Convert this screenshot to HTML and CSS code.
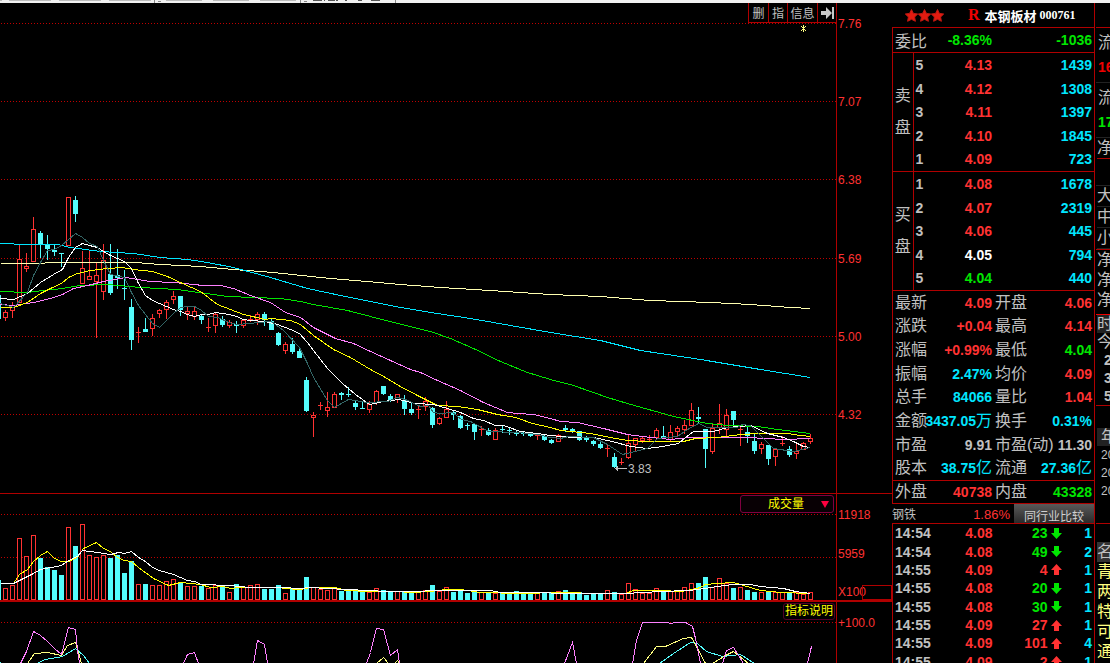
FILE: index.html
```html
<!DOCTYPE html>
<html lang="zh-CN">
<head>
<meta charset="utf-8">
<title>本钢板材 000761</title>
<link rel="stylesheet" href="styles.css">
</head>
<body>
<div class="app">
  <header class="strip">
    <svg width="420" height="3" shape-rendering="crispEdges" aria-hidden="true">
      <path d="M0 0h2M9 0h42M59 0h42M109 0h42M166 0h36M213 0h36M260 0h36" stroke="#bbb" stroke-width="2"/>
      <path d="M154.500 0v3M158 1.500h3M300.500 0v3M304 1.500h3M395.500 0v3" stroke="#888"/>
      <path d="M313 .5h9M324 .5h1M328 .5h7M336 .5h2M345 .5h2M358 .5h4M371 .5h9" stroke="#555"/>
    </svg>
  </header>
  <main class="main">
    <section class="charts">
      <div class="pane pane-price">
        <svg class="plot" id="price" viewBox="0 3 836 490" preserveAspectRatio="none"></svg>
        <div class="axis axis-price"><span>7.76</span><span>7.07</span><span>6.38</span><span>5.69</span><span>5.00</span><span>4.32</span></div>
        <div class="toolbar">
          <button type="button">删</button><button type="button">指</button><button type="button" class="wide">信息</button><button type="button" aria-label="隐藏面板"><svg width="13" height="12" viewBox="0 0 13 12"><path d="M0 4h5V0l6 6-6 6V8H0zM11 0h2v12h-2z" fill="#c8c8c8"/></svg></button>
        </div>
      </div>
      <div class="pane pane-volume">
        <svg class="plot" id="volume" viewBox="0 494 836 106" preserveAspectRatio="none"></svg>
        <div class="axis axis-volume"><span>11918</span><span>5959</span><span class="unit">X100<i></i></span></div>
        <div class="picker">
          <select aria-label="指标"><option>成交量</option></select>
          <svg width="8" height="7" aria-hidden="true"><path d="M0 0h8L4 7z" fill="#ff0040"/></svg>
        </div>
      </div>
      <div class="pane pane-indicator">
        <svg class="plot" id="indicator" viewBox="0 602 836 61" preserveAspectRatio="none"></svg>
        <div class="axis axis-indicator"><span>+100.0</span></div>
        <button type="button" class="explain">指标说明</button>
      </div>
    </section>

    <section class="quote">
      <h1 class="title">
        <svg class="stars" width="40" height="13" viewBox="0 0 40 13" aria-hidden="true"><g fill="#e31b10" stroke="#c01a12" stroke-width="1"><path id="star" d="M6.500.5l1.900 3.900 4.300.6-3.100 3 .8 4.300-3.900-2-3.900 2 .8-4.300L.3 5l4.300-.6z"/><use href="#star" x="13"/><use href="#star" x="26"/></g></svg>
        <span class="margin">R</span><span class="name">本钢板材</span><span class="code">000761</span>
      </h1>
      <div class="panel">
        <div class="ratio"><span class="label">委比</span><b class="green">-8.36%</b><b class="green end">-1036</b></div>
        <table class="book">
          <tr><th rowspan="5">卖<br>盘</th><td>5</td><td class="red">4.13</td><td>1439</td></tr>
          <tr><td>4</td><td class="red">4.12</td><td>1308</td></tr>
          <tr><td>3</td><td class="red">4.11</td><td>1397</td></tr>
          <tr><td>2</td><td class="red">4.10</td><td>1845</td></tr>
          <tr><td>1</td><td class="red">4.09</td><td>723</td></tr>
        </table>
        <table class="book">
          <tr><th rowspan="5">买<br>盘</th><td>1</td><td class="red">4.08</td><td>1678</td></tr>
          <tr><td>2</td><td class="red">4.07</td><td>2319</td></tr>
          <tr><td>3</td><td class="red">4.06</td><td>445</td></tr>
          <tr><td>4</td><td class="white">4.05</td><td>794</td></tr>
          <tr><td>5</td><td class="green">4.04</td><td>440</td></tr>
        </table>
        <dl class="stats">
          <div><dt>最新</dt><dd class="red">4.09</dd></div><div><dt>开盘</dt><dd class="red">4.06</dd></div>
          <div><dt>涨跌</dt><dd class="red">+0.04</dd></div><div><dt>最高</dt><dd class="red">4.14</dd></div>
          <div><dt>涨幅</dt><dd class="red">+0.99%</dd></div><div><dt>最低</dt><dd class="green">4.04</dd></div>
          <div><dt>振幅</dt><dd class="cyan">2.47%</dd></div><div><dt>均价</dt><dd class="red">4.09</dd></div>
          <div><dt>总手</dt><dd class="cyan">84066</dd></div><div><dt>量比</dt><dd class="red">1.04</dd></div>
          <div><dt>金额</dt><dd class="cyan">3437.05<span>万</span></dd></div><div><dt>换手</dt><dd class="cyan">0.31%</dd></div>
          <div><dt>市盈</dt><dd>9.91</dd></div><div><dt>市盈(动)</dt><dd>11.30</dd></div>
          <div><dt>股本</dt><dd class="cyan">38.75<span>亿</span></dd></div><div><dt>流通</dt><dd class="cyan">27.36<span>亿</span></dd></div>
        </dl>
        <dl class="stats flows">
          <div><dt>外盘</dt><dd class="red">40738</dd></div><div><dt>内盘</dt><dd class="green">43328</dd></div>
        </dl>
      </div>
      <div class="industry"><span>钢铁</span><span class="rate">1.86%</span><button type="button">同行业比较</button></div>
      <table class="ticks" id="ticks"></table>
    </section>

    <aside class="side">
      <div class="flow"><span>流</span><b class="hot">16</b></div>
      <div class="flow"><span>流</span><b class="cool">17</b></div>
      <div class="net"><span>净</span></div>
      <div class="sizes"><span>大</span><span>中</span><span>小</span></div>
      <div class="nets"><span>净</span><span>净</span><span>净</span></div>
      <div class="times"><span class="head">时</span><span>今</span><b>2</b><b>3</b><b>5</b></div>
      <div class="years"><span class="head">年</span><span>20</span><span>20</span><span>20</span></div>
      <div class="names"><span class="head">名</span><span>青</span><span>两</span><span>特</span><span>可</span><span>通</span></div>
    </aside>
  </main>
</div>
<script src="chart.js"></script>
</body>
</html>
```
FILE: styles.css
```css
* { box-sizing: border-box; margin: 0; padding: 0; }

body {
  background: #000;
  color: #c0c0c0;
  font-family: "Liberation Sans", "Noto Sans CJK SC", sans-serif;
  font-size: 12px;
}

button, select {
  font: inherit;
  color: inherit;
  background: #000;
  border: 0;
}

.app { display: flex; flex-direction: column; height: 100vh; overflow: hidden; }
.strip { flex: none; height: 3px; background: #f0f0f0; }
.strip svg { display: block; }
.main { flex: 1; display: flex; min-height: 0; }

.red { color: #ff3232; }
.green { color: #00e600; }
.cyan { color: #00e6ff; }
.white { color: #fff; }

/* charts */
.charts { flex: 1; min-width: 0; display: flex; flex-direction: column; }
.pane { position: relative; display: flex; min-height: 0; }
.pane-price { flex: 491 1 491px; border-bottom: 1px solid #b00000; }
.pane-volume { flex: 108 1 108px; border-bottom: 2px solid #b00000; }
.pane-indicator { flex: 61 1 61px; }
.plot { flex: 1; min-width: 0; height: 100%; display: block; }
.axis {
  flex: none;
  width: 56px;
  padding-left: 1px;
  border-left: 1px solid #b00000;
  color: #ff3232;
  line-height: 16px;
  display: flex;
  flex-direction: column;
}
.axis-price { justify-content: space-between; padding-top: 13px; padding-bottom: 70px; }
.axis-volume { justify-content: space-between; padding-top: 13px; }
.axis-indicator { padding-top: 13px; }
.unit { display: flex; justify-content: space-between; align-items: flex-end; }
.unit i { width: 30px; height: 15px; border: 1px solid #b00000; margin-left: -8px; }

.toolbar {
  position: absolute;
  top: 0;
  right: 55px;
  display: flex;
  height: 20px;
  border: solid #b00000;
  border-width: 0 1px 1px;
}
.toolbar button { width: 19px; display: grid; place-items: center; }
.toolbar button + button { border-left: 1px solid #b00000; }
.toolbar .wide { width: 30px; }

.picker { position: absolute; top: 1px; right: 58px; width: 94px; height: 18px; }
.picker select {
  appearance: none;
  width: 100%;
  height: 100%;
  border: 1px solid #800040;
  border-radius: 3px;
  color: #ff0;
  background: #080004;
  padding-left: 27px;
}
.picker svg { position: absolute; top: 6px; right: 5px; }

.explain {
  position: absolute;
  top: 1px;
  right: 57px;
  height: 17px;
  padding: 0 1px;
  border: 1px solid #500028;
  border-radius: 3px;
  color: #ff0;
  line-height: 15px;
}

/* quote panel */
.quote {
  flex: none;
  width: 203px;
  display: flex;
  flex-direction: column;
  border-right: 1px solid #b00000;
}
.title { flex: none; height: 24px; display: flex; align-items: center; padding-left: 13px; color: #fff; font-size: 12px; white-space: nowrap; }
.stars { flex: none; }
.margin { font: bold 16px "Liberation Serif", serif; color: #f00000; margin: 0 5px 0 23px; }
.name { font-size: 13px; }
.code { font-family: "Liberation Serif", serif; margin-left: 3px; }

.panel { flex: none; border: solid #b00000; border-width: 1px 0 1px 1px; }
.label, .book th, .stats dt { font-size: 16px; font-weight: normal; }
.ratio { display: flex; align-items: center; height: 24px; padding: 0 2px; font-size: 14px; }
.ratio .label { width: 32px; }
.ratio .green { width: 65px; text-align: right; }
.ratio .end { flex: 1; }

.book {
  width: 100%;
  height: 119px;
  border-collapse: collapse;
  border-top: 1px solid #b00000;
  font-size: 14px;
  font-weight: bold;
  line-height: 16px;
}
.book th { width: 20px; border-right: 1px solid #b00000; line-height: 32px; }
.book td { text-align: right; padding-right: 2px; }
.book td:nth-last-child(3) { width: 14px; text-align: left; padding-left: 2px; padding-right: 0; }
.book td:nth-last-child(2) { width: 65px; padding-right: 0; }
.book td:last-child { color: #00e6ff; }

.stats {
  display: grid;
  grid-template-columns: 97px 1fr;
  grid-auto-rows: 1fr;
  column-gap: 3px;
  min-height: 190px;
  padding: 0 2px;
  border-top: 1px solid #b00000;
  white-space: nowrap;
}
.stats div { display: flex; align-items: center; min-width: 0; line-height: 20px; }
.stats dd { flex: 1; min-width: 0; display: flex; justify-content: flex-end; font-size: 14px; font-weight: bold; }
.stats dd span { font-size: 16px; font-weight: normal; }
.flows { min-height: 23px; }

.industry { flex: none; display: flex; align-items: stretch; height: 19px; line-height: 22px; }
.rate { flex: 1; text-align: right; padding-right: 4px; color: #ff3232; font-size: 13px; }
.industry button { width: 80px; padding-top: 2px; color: #d0d0d0; background: linear-gradient(#5a5a5a, #2a2a2a); }

.ticks {
  flex: none;
  width: 100%;
  border-collapse: collapse;
  border: solid #b00000;
  border-width: 1px 0 0 1px;
  font-size: 14px;
  font-weight: bold;
  height: 148px;
  line-height: 16px;
}
.ticks td { text-align: right; }
.ticks td:nth-child(1) { width: 50px; padding-left: 2px; text-align: left; }
.ticks td:nth-child(2) { width: 50px; color: #ff3232; }
.ticks td:nth-child(3) { width: 55px; }
.ticks td:nth-child(4) { width: 18px; text-align: center; }
.ticks td:nth-child(5) { color: #00e6ff; padding-right: 2px; }
.ticks svg { display: block; margin: 0 auto; }

/* clipped side panel */
.side { flex: none; width: 15px; overflow: hidden; padding: 24px 0 0 1px; font-size: 16px; white-space: nowrap; }
.side div { display: flex; flex-direction: column; border-top: 1px solid #222; padding-left: 1px; }
.side .flow { height: 55px; padding: 2px 0 0 2px; line-height: 25px; }
.side .flow:first-child { border-color: #b00000; }
.side b { font-size: 14px; }
.hot { color: #f00000; }
.cool { color: #00e600; }
.side .net { height: 48px; line-height: 20px; }
.net span { border-bottom: 1px solid #b00000; }
.sizes span { height: 21px; line-height: 20px; border-bottom: 1px solid #222; }
.side .nets { border-color: #b00000; height: 65px; line-height: 20px; }
.side .times { border-color: #f00000; height: 91px; line-height: 18px; }
.times b { padding-left: 7px; }
.side .head { background: #222; }
.side .years { border-color: #b00000; height: 118px; padding-top: 22px; line-height: 18px; font-size: 12px; }
.years .head { font-size: 16px; }
.years span { padding-left: 4px; }
.side .names { border-color: #b00000; padding-top: 18px; line-height: 20px; color: #ffff80; }
.names .head { background: #333; color: #c0c0c0; }
```
FILE: chart.js
```js
const UP = '#ff3232', DOWN = '#54fcfc';

// colour (r up, c down), high, body top, body bottom, low, volume top
const candles = `c 295 295 318 318 580
r 310 312 317 320 588|r 302 305 310 317 585|r 244 259 302 302 538|r 253 266 268 271 556|r 217 229 261 261 535
c 231 233 243 257 558|c 235 244 248 259 567|c 244 250 251 255 570|c 253 253 253 266 575|r 197 197 245 245 527
c 196 200 213 221 546|r 251 268 283 283 524|r 251 276 279 279 555|r 263 275 281 337 557|r 244 260 291 299 555
c 244 274 292 294 558|c 249 275 277 288 555|c 270 288 288 299 573|c 299 307 339 349 561|r 327 332 333 342 584
c 318 329 331 331 584|r 314 318 328 335 585|r 309 310 313 317 585|r 300 302 309 318 581|r 291 296 299 303 579
c 296 296 309 315 582|r 307 311 313 319 586|r 307 311 316 319 586|c 314 316 319 323 586|r 318 327 327 331 588
r 313 314 325 332 585|c 316 319 324 326 587|r 320 322 325 327 592|c 321 324 325 332 584|r 319 320 325 327 587
r 315 319 319 321 585|r 312 314 319 324 584|c 312 314 319 325 589|c 319 321 329 329 589|c 332 333 344 345 585
r 342 344 350 353 593|c 338 344 351 353 589|c 347 351 357 357 590|c 377 380 410 411 577|r 412 415 417 436 587
r 402 405 405 409 589|r 392 407 410 416 590|r 392 394 407 407 588|c 392 393 394 399 591|c 387 394 394 396 590
c 401 403 406 409 590|c 402 408 408 408 591|r 401 404 409 412 592|r 390 391 402 404 588|c 386 386 393 394 590
c 394 396 399 401 591|r 394 394 399 402 591|c 395 400 408 414 591|c 403 409 412 414 592|r 406 409 409 418 592
r 397 401 406 410 590|c 407 408 424 427 585|r 417 418 423 424 591|r 401 409 417 417 587|c 411 412 414 419 592
c 415 416 427 428 590|c 423 425 425 429 593|c 423 424 431 439 591|r 426 429 429 435 592|c 428 430 434 435 592
r 428 430 439 439 593|c 426 429 429 432 592|c 428 430 430 434 593|c 430 433 433 435 591|c 432 433 433 435 592
c 433 434 435 436 592|r 433 435 435 439 593|c 435 436 439 440 593|c 439 440 442 443 593|r 434 435 441 441 591
c 425 428 429 431 590|c 428 429 430 432 592|c 431 431 439 440 592|c 436 438 439 441 595|c 440 441 443 445 594
c 442 444 447 448 594|r 445 448 448 456 590|c 453 457 466 467 592|r 458 462 462 464 594|r 434 443 457 458 583
r 438 438 444 450 589|r 436 438 440 442 593|r 435 439 440 441 593|r 428 430 437 439 588|c 426 436 437 437 590
r 425 432 439 440 591|r 426 428 431 435 591|r 420 425 429 433 587|r 403 410 425 425 583|c 407 417 418 422 583
c 429 429 448 467 577|r 424 428 451 453 587|r 404 423 427 433 578|r 409 415 429 435 583|c 411 411 419 424 588
r 427 429 429 445 587|c 426 432 435 442 590|c 434 441 450 453 592|r 442 444 448 453 592|c 445 445 458 464 591
r 449 449 456 465 592|r 436 443 443 445 592|c 446 449 454 456 593|r 443 451 453 458 592|r 442 443 449 449 594
r 434 438 441 443 592`.split(/[|\n]/).map(s => {
  const [kind, ...v] = s.split(' ');
  return [kind, ...v.map(Number)];
});

const averages = {
  '#ffffb0': '0,263 30,263 60,262 135,262 160,264 200,266 233,269 273,272 330,278 367,281 400,284 440,287 490,290 550,294 600,296 650,300 710,302 750,304 790,307 810,308',
  '#00e6ff': '0,243 27,244 57,244 70,247 100,251 133,253 160,257 187,259 207,262 233,267 270,277 280,280 307,288 340,295 370,301 400,307 437,313 470,318 510,325 550,332 600,340 640,350 700,359 760,369 810,377',
  '#00e600': '0,291 27,292 43,290 62,288 80,285 107,284 140,287 177,289 227,296 280,298 300,301 313,304 347,310 370,316 397,323 430,331 450,338 473,348 500,361 527,372 550,379 573,385 607,397 627,403 673,416 707,423 727,425 757,426 777,429 810,433',
  '#ff80ff': '0,304 13,305 33,302 50,298 62,294 73,288 87,285 103,281 125,277 150,281 173,282 203,285 220,285 233,288 250,295 270,302 285,312 300,317 313,327 335,338 353,343 370,351 390,360 410,369 420,372 437,380 460,390 483,402 507,412 517,413 533,414 550,418 560,421 577,422 603,428 627,434 650,437 670,439 690,437 747,437 783,439 810,438',
  '#ffff00': '0,307 13,307 27,302 40,293 50,288 61,283 68,277 77,273 90,270 107,268 122,267 133,269 152,271 167,276 182,283 200,291 217,304 230,309 243,314 265,319 270,318 290,320 300,324 313,335 333,349 350,357 370,369 385,377 398,385 417,395 437,405 457,406 477,409 497,414 515,417 532,423 550,427 560,430 590,433 610,437 627,440 647,441 683,441 695,438 717,437 740,434 760,433 787,433 800,435 810,436',
  '#ffffff': '0,298 13,299 27,293 40,282 53,274 62,269 68,257 75,247 82,243 89,245 97,247 103,251 110,255 117,258 124,261 131,268 138,283 145,295 152,300 159,303 166,306 173,309 180,311 187,314 194,316 201,314 208,314 215,312 229,314 236,316 243,319 250,320 264,321 273,323 277,324 290,329 299,333 307,342 313,350 327,368 342,383 355,394 369,404 383,401 398,399 415,403 433,404 447,408 460,412 473,418 483,420 495,425 503,425 520,431 537,433 550,435 573,437 593,437 612,441 630,446 647,448 662,446 678,443 685,437 693,431 713,431 727,427 750,425 767,433 783,437 793,441 803,446 810,447',
  '#336666': '0,303 13,307 27,292 33,275 40,262 47,250 54,249 61,245 68,239 75,233 82,237 89,243 97,246 103,260 110,274 124,277 131,292 138,305 145,314 152,323 159,327 166,320 173,313 180,307 187,306 194,306 201,310 208,316 217,317 229,322 236,324 250,323 257,322 271,321 283,330 299,347 307,363 313,377 327,400 334,407 348,399 367,402 387,401 397,397 405,399 420,406 428,405 433,412 440,413 452,412 461,419 470,421 488,431 517,432 537,434 550,437 560,438 568,436 593,437 607,444 622,454 647,448 657,438 677,436 687,429 698,423 707,427 737,427 741,424 750,425 760,435 773,448 793,451 810,447'
};
const volumeAverages = {
  '#ffff00': '0,583 13,583 19,574 27,569 33,561 40,555 47,551 54,558 61,561 68,561 77,557 83,548 96,542 103,548 110,551 117,557 124,560 131,561 138,567 153,578 168,585 180,582 200,584 210,587 223,586 230,588 240,587 280,587 283,588 300,589 310,587 335,587 345,590 370,591 395,591 412,592 430,591 445,589 460,589 480,592 520,593 560,592 600,593 625,593 633,590 660,590 680,591 692,589 700,587 705,584 716,583 733,582 743,585 760,590 780,592 810,593',
  '#ffffff': '0,583 13,583 27,576 33,573 40,569 61,565 68,560 77,556 82,550 97,552 110,554 118,552 124,553 131,551 138,557 145,561 152,567 159,570 173,574 187,580 194,581 201,584 229,585 250,587 280,587 300,588 310,587 345,589 370,590 385,591 420,591 430,590 490,590 500,592 540,592 560,593 600,593 625,593 660,591 688,590 705,588 716,586 733,584 750,584 760,586 783,588 795,591 810,593'
};
const oscillators = [
  ['#54fcfc', '0,662 2,664', '36,663 45,659 62,656 75,648 83,655 89,663', '659,663 673,653 690,642 697,643 706,651 722,656 740,654 754,663'],
  ['#ffff80', '27,663 34,653 47,652 61,655 67,645 75,642 79,655 81,663', '376,663 383,657 388,663', '394,663 397,660 399,663', '643,663 656,646 665,646 683,638 691,637 698,650 705,663', '712,663 725,655 733,651 748,663'],
  ['#ff80ff', '20,663 26,651 33,631 40,635 47,641 54,648 61,654 68,627 75,629 77,650 79,663', '183,663 187,654 194,652 198,663', '253,663 257,640 264,644 267,663', '366,663 370,652 376,628 383,629 387,644 390,655 397,649 399,663', '564,663 572,642 576,663', '632,663 636,640 642,622 667,622 670,623 675,622 685,622 692,626 695,638 700,663', '722,663 726,650 733,647 743,663', '807,663 811,646']
];

const grid = ys => ys.map(y => `<path d="M1 ${y}.5H836" stroke="#c00000" stroke-dasharray="1 2"/>`).join('');
const line = (color, pts) => `<polyline points="${pts}" transform="translate(.5 .5)" fill="none" stroke="${color}"/>`;
const lines = set => Object.entries(set).map(([c, p]) => line(c, p)).join('');
const draw = (id, body) => {
  document.getElementById(id).innerHTML = `<g shape-rendering="crispEdges">${body}</g>`;
};

function box(kind, x, top, bottom) {
  const h = bottom - top;
  if (kind === 'c') return `<path d="M${x - 2} ${top}h5v${h + 1}h-5z" fill="${DOWN}"/>`;
  if (h < 2) return `<path d="M${x - 2} ${top}.5h5" stroke="${UP}"/>`;
  return `<rect x="${x - 1.5}" y="${top + .5}" width="4" height="${h}" fill="#000" stroke="${UP}"/>`;
}

const at = i => 7 * i - 2;
draw('price', grid([23, 101, 179, 258, 336, 414]) +
  candles.map(([k, hi, top, bottom, lo], i) =>
    `<path d="M${at(i)}.5 ${hi}V${lo + 1}" stroke="${k === 'r' ? UP : DOWN}"/>` + box(k, at(i), top, bottom)).join('') +
  lines(averages) +
  `<path d="M615 468.500h12M615.500 468v1M616.500 467v3M617.500 466v5" stroke="#c0c0c0"/>
   <path d="M803.500 25v7M801 26l5 5M806 26l-5 5" stroke="#ffff80"/>
   <text x="628" y="473" font-size="12" fill="#c0c0c0">3.83</text>`);
draw('volume', grid([514, 557]) +
  candles.map((c, i) => box(c[0], at(i), c[5], 599)).join('') + lines(volumeAverages));
draw('indicator', grid([622]) +
  oscillators.map(([c, ...runs]) => runs.map(r => line(c, r)).join('')).join(''));

const ticks = [
  ['14:54', '4.08', 23, 0, 1], ['14:54', '4.08', 49, 0, 2], ['14:55', '4.09', 4, 1, 1], ['14:55', '4.08', 20, 0, 1],
  ['14:55', '4.08', 30, 0, 1], ['14:55', '4.09', 27, 1, 1], ['14:55', '4.09', 101, 1, 4], ['14:55', '4.09', 2, 1, 1]
];
document.getElementById('ticks').innerHTML = ticks.map(([time, price, size, up, n]) => {
  const arrow = up ? 'M5.500 0L11 6H8v5H3V6H0z' : 'M5.500 11L0 5h3V0h5v5h3z';
  const tone = up ? 'red' : 'green';
  return `<tr><td>${time}</td><td>${price}</td><td class="${tone}">${size}</td>
    <td class="${tone}"><svg width="11" height="11"><path d="${arrow}" fill="currentColor"/></svg></td><td>${n}</td></tr>`;
}).join('');
```
